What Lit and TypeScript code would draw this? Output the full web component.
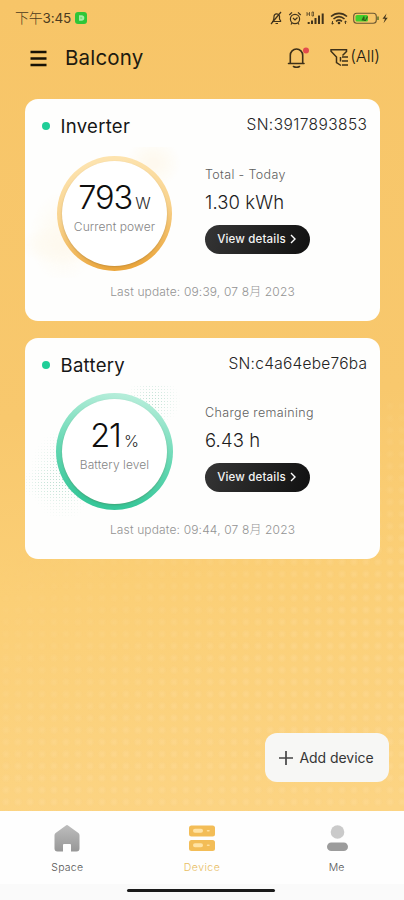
import { LitElement, html, css, svg } from "lit";
import { customElement, property } from "lit/decorators.js";

const family = css`Inter, "Noto Sans", "Noto Sans CJK SC", sans-serif`;

@customElement("status-bar")
class StatusBar extends LitElement {
  static styles = css`
    :host { display: flex; height: 35px; padding: 0 14px 0 15px; align-items: center; justify-content: space-between; box-sizing: border-box; font-family: ${family}; color: #4b3b20; }
    .left { display: flex; align-items: center; gap: 4px; font-size: 13.5px; letter-spacing: -0.2px; line-height: 20px; }
    .cjk { font: 300 14px/20px "Noto Sans CJK SC", sans-serif; transform: translateY(-1px); }
    .time { margin-left: -4px; }
    .app { width: 12px; height: 12px; border-radius: 3px; background: #2fc638; }
    svg { display: block; }
  `;
  render() {
    return html`
      <div class="left"><span class="cjk">下午</span><span class="time">3:45</span>
        <svg class="app" viewBox="0 0 12 12"><path d="M4 3.2h2.500a2.800 2.800 0 0 1 0 5.600H4z" fill="#a5eda5" /><path d="M5.200 6h2" stroke="#4bcf50" stroke-width=".9" /></svg>
      </div>
      <svg width="121" height="16" viewBox="269 9 121 16" fill="none" stroke="#40331c" stroke-width="1.2">
        <path d="M272 20.5h9M273 20c1-1.500 1-3 1-4.500a2.800 2.800 0 0 1 5.500-.5v3l1.500 2.500M275.500 22.500h2.500M271 23l10-12" />
        <circle cx="295" cy="18" r="4.600" /><path d="M289.300 14l2.700-2.700M300.700 14L298 11.300M293 17l2 2 2.500-2.500M292 22l-1 1.500M298 22l1 1.500" />
        <path d="M307 11v4M309.500 11v4M307 13h2.500M312 11h1.500v4H312z" stroke-width=".7" />
        <path d="M308.700 23v-2M312 23v-3.500M315.500 23v-6M319 23v-8.500M322.700 23V12.500" stroke-width="2" />
        <path d="M331 15.500c4.800-4.200 11.200-4.200 16 0M333.500 18c3.500-3 7.500-3 11 0M336 20.300c2-1.600 4-1.600 6 0" stroke-width="1.600" />
        <circle cx="339" cy="22" r="1.300" fill="#40331c" stroke="none" /><path d="M332.500 20v3M331.300 22l1.200 1.200 1.200-1.200M345.500 23v-3M344.300 21.200l1.200-1.200 1.200 1.200" stroke-width=".9" />
        <rect x="353.700" y="12.200" width="22.600" height="10" rx="3" stroke="#6b5733" stroke-width="1.100" />
        <rect x="355.500" y="14" width="12.500" height="6.500" rx="1.500" fill="#42cf2c" stroke="none" />
        <path d="M362 19.500l2-4v4h1.500l2-4M378 15.500v3.500" stroke="#315f18" />
        <path d="M386.500 12.500l-4 5.300h2.500l-1.500 4.500 4.200-5.600h-2.500z" fill="#40331c" stroke="none" />
      </svg>`;
  }
}

@customElement("top-bar")
class TopBar extends LitElement {
  static styles = css`
    :host { display: flex; height: 64px; padding: 0 24px 18px 30px; box-sizing: border-box; align-items: center; font-family: ${family}; color: #201a0f; }
    .menu { width: 17px; margin-right: 18px; }
    .title { flex: 1; font-size: 20.5px; line-height: 28px; letter-spacing: 0.18px; }
    .bell { margin-right: 20px; transform: translate(1px, -1px); }
    .filter { margin-right: 2px; transform: translate(1px, -1px); }
    .all { font-size: 16.5px; font-weight: 300; line-height: 20px; letter-spacing: -0.1px; transform: translateY(-2px); }
    svg { display: block; }
  `;
  render() {
    return html`
      <svg class="menu" width="17" height="18" viewBox="0 0 17 18"><path d="M.5 3h16M.5 9.500h16M.5 16h16" stroke="#171205" stroke-width="2.700" /></svg>
      <span class="title">Balcony</span>
      <svg class="bell" width="23" height="24" viewBox="287 44 23 24" fill="none" stroke="#3d3018" stroke-width="1.600">
        <path d="M288.500 62.500h15.500M290.300 62.500v-8.300a6.200 6.200 0 0 1 12.400 0v8.300M293.500 65.500q3 1.600 6 0" stroke-linecap="round" />
        <circle cx="306" cy="49.500" r="3" fill="#e34b4c" stroke="none" />
      </svg>
      <svg class="filter" width="19" height="22" viewBox="329 45 19 22" fill="none" stroke="#3d3018" stroke-width="1.500">
        <path d="M341.500 54.500l4-4V48.800h-15.500v1.500l5.500 5.700v5.500l4.500 3M339.500 56v4.500M341 56h6M341 60h6M341 64h6" />
      </svg>
      <span class="all">(All)</span>`;
  }
}

@customElement("device-card")
class DeviceCard extends LitElement {
  @property() name = "";
  @property() sn = "";
  @property() value = "";
  @property() unit = "";
  @property() caption = "";
  @property() label = "";
  @property() amount = "";
  @property() stamp = "";
  @property({ reflect: true }) tone = "amber";
  static styles = css`
    :host { display: flex; flex-direction: column; height: 222px; border-radius: 13px; background: #fefefd; font-family: ${family}; box-sizing: border-box; overflow: hidden; }
    :host([tone="green"]) { height: 221px; }
    .head { display: flex; align-items: center; height: 54px; padding: 0 13px 0 17px; }
    :host([tone="green"]) .head { height: 53px; }
    .dot { width: 8px; height: 8px; border-radius: 50%; background: #20ce98; margin-right: 10.500px; }
    .name { flex: 1; font-size: 18.500px; line-height: 24px; color: #161616; letter-spacing: 0.3px; }
    .sn { font-size: 15.500px; font-weight: 300; line-height: 20px; color: #242424; letter-spacing: 0.42px; margin-right: -0.400px; transform: translateY(-1px); }
    :host([tone="green"]) .sn { letter-spacing: 0.26px; }
    .body { display: flex; height: 121px; }
    .gauge { position: relative; width: 180px; display: flex; padding: 2px 0 0 31px; box-sizing: border-box; }
    .halo { position: absolute; inset: -6px 0 -4px 0; background: radial-gradient(circle at 1.500px 1.500px, #b9ddcf 0.600px, transparent 1px) 0 0 / 3px 3px; -webkit-mask: radial-gradient(ellipse 46px 20px at 38px 98px, #000, transparent), radial-gradient(ellipse 34px 46px at 38px 90px, rgba(0,0,0,.75) 25%, transparent), radial-gradient(ellipse 28px 25px at 128px 16px, rgba(0,0,0,.9) 20%, transparent); }
    :host([tone="amber"]) .halo { background: #fff4dc; opacity: 0.45; }
    .ring { position: relative; width: 117px; height: 117px; border-radius: 50%; padding: 6px; box-sizing: border-box; background: linear-gradient(190deg, #b4edd9 8%, #69d9b5 50%, #37c799 88%); }
    :host([tone="amber"]) .ring { margin: 1px; width: 115px; height: 115px; padding: 5px; background: linear-gradient(170deg, #fde3ae 10%, #f8d28c 50%, #eba63c 92%); }
    .face { height: 100%; border-radius: 50%; background: #fff; box-shadow: 0 1px 2px rgba(90, 65, 20, 0.25); display: flex; flex-direction: column; align-items: center; }
    .reading { display: flex; align-items: baseline; margin-top: 18px; height: 38px; gap: 3px; color: #0e0e0e; font-size: 32.500px; font-weight: 300; line-height: 38px; letter-spacing: -1px; }
    .unit { font-size: 16px; letter-spacing: 0; color: #2c2c2c; }
    .caption { margin-top: 0; font-size: 12px; font-weight: 300; line-height: 20px; color: #858585; letter-spacing: 0.08px; white-space: nowrap; }
    .side { display: flex; flex-direction: column; align-items: flex-start; padding-top: 12px; }
    .label { font-size: 12.500px; font-weight: 300; line-height: 20px; color: #606060; letter-spacing: 0.35px; }
    .amount { margin-top: 5px; font-size: 18.500px; font-weight: 300; line-height: 24px; color: #1d1d1d; letter-spacing: 0.1px; }
    .more { margin-top: 11px; width: 105px; height: 29px; border: 0; padding: 0 2px 2px 0; border-radius: 15px; background: linear-gradient(110deg, #353535, #111); color: #f4f4f4; font: 500 11.500px/16px ${family}; letter-spacing: 0.18px; display: flex; align-items: center; justify-content: center; gap: 4px; box-sizing: border-box; white-space: nowrap; }
    .foot { margin-top: 8px; text-align: center; font-size: 12px; font-weight: 300; line-height: 20px; color: #939393; letter-spacing: 0.15px; white-space: pre; }
  `;
  render() {
    return html`
      <div class="head"><i class="dot"></i><span class="name">${this.name}</span><span class="sn">${this.sn}</span></div>
      <div class="body">
        <div class="gauge"><div class="halo"></div><div class="ring"><div class="face">
          <div class="reading"><span>${this.value}</span><span class="unit">${this.unit}</span></div>
          <div class="caption">${this.caption}</div>
        </div></div></div>
        <div class="side">
          <span class="label">${this.label}</span><span class="amount">${this.amount}</span>
          <button class="more">View details<svg width="6" height="10" viewBox="0 0 6 10" fill="none"><path d="M1 1l4 4-4 4" stroke="#fff" stroke-width="1.400" /></svg></button>
        </div>
      </div>
      <div class="foot">Last update: ${this.stamp}</div>`;
  }
}

const icons = {
  space: svg`<defs><linearGradient id="g" x2="0" y2="1"><stop stop-color="#bdbdbd" /><stop offset="1" stop-color="#979797" /></linearGradient></defs><path d="M11.600 1.300a2 2 0 0 1 2.800 0l10 7.200q1.100.8 1.100 2.200V24q0 3-3 3H17v-6.500q0-1-1-1h-6q-1 0-1 1V27H3.500q-3 0-3-3V10.700q0-1.400 1.100-2.200z" transform="translate(0 .5)" fill="url(#g)" />`,
  device: svg`<rect y="1.500" width="26" height="11" rx="2.500" fill="#f3bd57" /><rect y="16" width="26" height="11" rx="2.500" fill="#f3bd57" /><path d="M6 6.800h6M6 21.300h6" stroke="#ffe3a5" stroke-width="4" stroke-linecap="round" /><path d="M18.500 6.800h1.500M18.500 21.300h1.500" stroke="#ffe0a0" stroke-width="1.500" stroke-linecap="round" />`,
  me: svg`<circle cx="13.500" cy="8" r="6.800" fill="#cacaca" /><rect x="3" y="18.500" width="21" height="8.500" rx="4.250" fill="#9c9c9c" />`,
};

@customElement("tab-bar")
class TabBar extends LitElement {
  static styles = css`
    :host { display: flex; flex-direction: column; height: 89px; background: #fefefe; font-family: ${family}; }
    .tabs { display: grid; grid-template-columns: repeat(3, 1fr); height: 73px; }
    .tab { display: flex; flex-direction: column; align-items: center; padding-top: 13px; gap: 7px; font-size: 10.500px; line-height: 18px; font-weight: 300; color: #555; letter-spacing: 0.25px; }
    .on { color: #e8bd62; letter-spacing: 0.450px; }
    .home { flex: 1; background: #fafafa; display: flex; justify-content: center; padding-top: 5px; }
    .bar { width: 148px; height: 3px; margin-right: 2px; border-radius: 2px; background: #1b1b1b; }
  `;
  render() {
    const tab = (label: string, icon: unknown, on = false) => html`
      <div class="tab ${on ? "on" : ""}"><svg width="26" height="28" viewBox="0 0 26 28">${icon}</svg><span>${label}</span></div>`;
    return html`
      <div class="tabs">${tab("Space", icons.space)}${tab("Device", icons.device, true)}${tab("Me", icons.me)}</div>
      <div class="home"><div class="bar"></div></div>`;
  }
}

@customElement("app-root")
class AppRoot extends LitElement {
  static styles = css`
    :host { display: flex; flex-direction: column; position: relative; height: 900px; font-family: ${family}; background: linear-gradient(175deg, #f7c568 0%, #f8c86d 45%, #fbcf76 64%, #fcd483 90%); }
    .weave { position: absolute; inset: 400px 0 89px 0; background: radial-gradient(circle at 6px 6px, rgba(255, 222, 160, 0.35) 1px, transparent 5px) 0 0 / 12px 12px; -webkit-mask: linear-gradient(150deg, transparent 25%, #000 65%); }
    .list { position: relative; display: flex; flex-direction: column; gap: 17px; padding: 0 24px 0 25px; flex: 1; }
    .add { position: absolute; right: 15px; bottom: 118px; width: 124px; height: 49px; border: 0; padding: 0 1px 0 0; border-radius: 12px; background: #f7f7f5; color: #363636; font: 400 14px/20px ${family}; letter-spacing: -0.050px; display: flex; align-items: center; justify-content: center; gap: 6px; white-space: nowrap; }
    tab-bar { position: relative; }
  `;
  render() {
    return html`
      <div class="weave"></div>
      <status-bar></status-bar>
      <top-bar></top-bar>
      <div class="list">
        <device-card name="Inverter" sn="SN:3917893853" value="793" unit="W" caption="Current power" label="Total - Today" amount="1.30 kWh" stamp="09:39, 07 8月 2023"></device-card>
        <device-card tone="green" name="Battery" sn="SN:c4a64ebe76ba" value="21" unit="%" caption="Battery level" label="Charge remaining" amount="6.43 h" stamp="09:44, 07 8月 2023"></device-card>
      </div>
      <button class="add"><svg width="14" height="14" viewBox="0 0 14 14"><path d="M7 0v14M0 7h14" stroke="#454545" stroke-width="1.700" /></svg>Add device</button>
      <tab-bar></tab-bar>`;
  }
}
